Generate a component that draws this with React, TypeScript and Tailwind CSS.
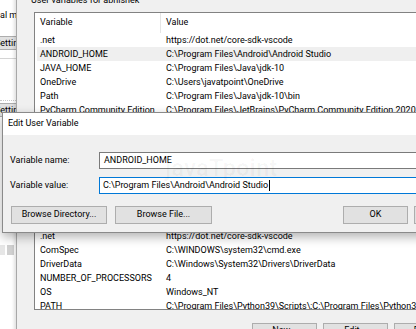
const userRows: [string, string][] = [
  [".net", "https://dot.net/core-sdk-vscode"],
  ["ANDROID_HOME", "C:\\Program Files\\Android\\Android Studio"],
  ["JAVA_HOME", "C:\\Program Files\\Java\\jdk-10"],
  ["OneDrive", "C:\\Users\\javatpoint\\OneDrive"],
  ["Path", "C:\\Program Files\\Java\\jdk-10\\bin"],
  ["PyCharm Community Edition", "C:\\Program Files\\JetBrains\\PyCharm Community Edition 2020.3\\bin;"],
  ["TEMP", "C:\\Users\\javatpoint\\AppData\\Local\\Temp"],
  ["TMP", "C:\\Users\\javatpoint\\AppData\\Local\\Temp"],
];

const systemRows: [string, string][] = [
  ["ChocolateyInstall", "C:\\ProgramData\\chocolatey"],
  [".net", "https://dot.net/core-sdk-vscode"],
  ["ComSpec", "C:\\WINDOWS\\system32\\cmd.exe"],
  ["DriverData", "C:\\Windows\\System32\\Drivers\\DriverData"],
  ["NUMBER_OF_PROCESSORS", "4"],
  ["OS", "Windows_NT"],
  ["PATH", "C:\\Program Files\\Python39\\Scripts\\;C:\\Program Files\\Python39\\;C:\\WINDOWS\\system32"],
];

function Row({ name, value, selected, first }: { name: string; value: string; selected?: boolean; first?: boolean }) {
  return (
    <div
      className={
        "mx-[2px] flex items-center whitespace-nowrap leading-[14px] " +
        (first ? "h-[13px] " : "h-[14px] ") +
        (selected ? "bg-[#efefef]" : "")
      }
    >
      <div className="w-[124px] shrink-0 pl-[3px]">{name}</div>
      <div className="pl-[5px]">{value}</div>
    </div>
  );
}

function WinButton({ label, className }: { label: string; className?: string }) {
  return (
    <div
      className={
        "h-[18px] shrink-0 flex items-center justify-center bg-[#e1e1e1] border border-[#adadad] whitespace-nowrap " +
        (className ?? "")
      }
    >
      {label}
    </div>
  );
}

export default function App() {
  return (
    <div className="relative w-[416px] h-[329px] overflow-hidden bg-white font-['Roboto',sans-serif] text-[9px] text-black">
      {/* settings window behind, on the left */}
      <div className="absolute left-0 top-0 w-[60px] h-full bg-white flex flex-col">
        <div className="mt-[9px] h-[12px] leading-[12px] whitespace-nowrap">al mode</div>
        <div className="mt-[15px] ml-[-12px] w-[60px] h-[14px] bg-[#e1e1e1] border border-[#adadad] pl-[6px] leading-[12px] whitespace-nowrap">
          Settings
        </div>
        <div className="mt-[8px] h-px bg-[#d4d4d4]" />
        <div className="mt-[41px] h-px border-t border-dotted border-[#c8c8c8]" />
        <div className="mt-[2px] ml-[-12px] w-[60px] h-[14px] bg-[#e1e1e1] border border-[#adadad] pl-[6px] leading-[12px] whitespace-nowrap">
          Settings
        </div>
        <div className="mt-[128px] flex h-[10px]">
          <div className="w-[5px] bg-[#e6e6e6]" />
          <div className="ml-[2px] w-[7px] bg-[#d0d0d0]" />
        </div>
      </div>

      {/* Environment Variables window */}
      <div className="absolute left-[16px] top-[-8px] w-[460px] h-[360px] bg-[#f0f0f0] border-l border-[#a8a8a8] shadow-[-2px_0_3px_rgba(0,0,0,0.12)] flex flex-col">
        <div className="mt-[2px] ml-[14px] h-[12px] leading-[12px] whitespace-nowrap">User variables for abhishek</div>
        <div className="mt-[6px] ml-[17px] h-[140px] border border-[#828282] bg-white overflow-hidden flex flex-col">
          <div className="flex h-[20px] items-center whitespace-nowrap">
            <div className="w-[126px] shrink-0 pl-[5px] border-r border-[#e5e5e5] h-full flex items-center">Variable</div>
            <div className="pl-[5px]">Value</div>
          </div>
          {userRows.map(([n, v]) => (
            <Row key={n} name={n} value={v} selected={n === "ANDROID_HOME"} />
          ))}
        </div>
        <div className="mt-[6px] ml-[235px] flex gap-[6px]">
          <WinButton label="New..." className="w-[65px]" />
          <WinButton label="Edit..." className="w-[65px]" />
          <WinButton label="Delete" className="w-[65px]" />
        </div>
        <div className="mt-[9px] ml-[14px] h-[12px] leading-[12px] whitespace-nowrap">System variables</div>
        <div className="mt-[18px] ml-[17px] h-[95px] border border-[#828282] bg-white overflow-hidden flex flex-col">
          {systemRows.map(([n, v], i) => (
            <Row key={n} name={n} value={v} first={i === 0} />
          ))}
        </div>
        <div className="mt-[13px] ml-[235px] flex gap-[6px]">
          {["New...", "Edit...", "Delete"].map((l) => (
            <div
              key={l}
              className="w-[65px] h-[18px] bg-[#e1e1e1] border border-[#adadad] text-center leading-[12px] whitespace-nowrap"
            >
              {l}
            </div>
          ))}
        </div>
      </div>

      {/* Edit User Variable dialog */}
      <div className="absolute left-[2px] top-[112px] w-[480px] h-[121px] border border-[#8a8a8a] bg-[#f0f0f0] shadow-[0_4px_10px_rgba(0,0,0,0.3)] flex flex-col">
        <div className="h-[22px] bg-white flex items-center pl-[5px] whitespace-nowrap">Edit User Variable</div>
        <div className="flex flex-col pl-[7px] pt-[17px]">
          <div className="flex items-center h-[17px]">
            <div className="w-[89px] shrink-0 whitespace-nowrap">Variable name:</div>
            <div className="w-[400px] h-[17px] border border-[#7a7a7a] bg-white pl-[4px] flex items-center whitespace-nowrap">
              ANDROID_HOME
            </div>
          </div>
          <div className="mt-[8px] flex items-center h-[17px]">
            <div className="w-[89px] shrink-0 whitespace-nowrap">Variable value:</div>
            <div className="w-[400px] h-[17px] border border-[#0078d7] bg-white pl-[3px] flex items-center whitespace-nowrap">
              <span>C:\Program Files\Android\Android Studio</span>
              <span className="ml-px w-px h-[11px] bg-black" />
            </div>
          </div>
          <div className="mt-[12px] flex">
            <WinButton label="Browse Directory..." className="ml-px w-[96px]" />
            <WinButton label="Browse File..." className="ml-[8px] w-[97px]" />
            <WinButton label="OK" className="ml-[131px] w-[65px] border-[#0078d7]" />
            <WinButton label="Cancel" className="ml-[6px] w-[65px]" />
          </div>
        </div>
      </div>

      {/* faint watermark */}
      <div className="absolute left-[165px] top-[150px] text-[24px] font-bold text-black/[0.03] whitespace-nowrap pointer-events-none">
        javaTpoint
      </div>
    </div>
  );
}
